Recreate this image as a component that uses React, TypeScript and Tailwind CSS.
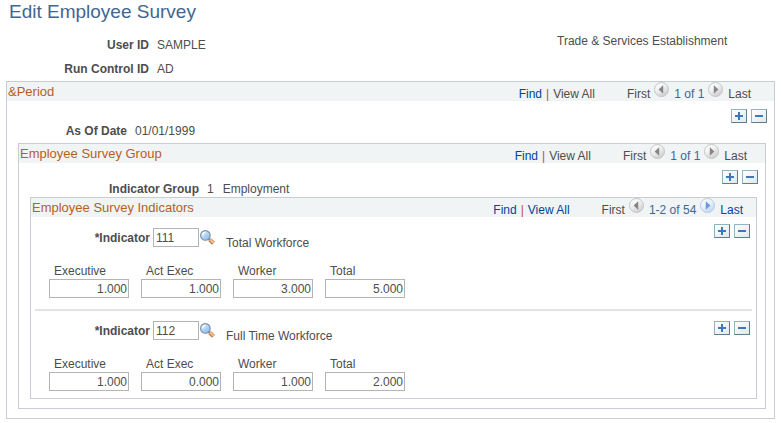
import React, { useId, useState } from 'react';
import { clsx } from 'clsx';

interface NavProps {
    count: string;
    canViewAll?: boolean;
    canGoNext?: boolean;
    className?: string;
}

interface GroupBoxProps extends NavProps {
    title: string;
    boxClass?: string;
    children: React.ReactNode;
}

interface Indicator {
    code: string;
    name: string;
    values: string[];
}

const COLUMNS = ['Executive', 'Act Exec', 'Worker', 'Total'];

const INDICATORS: Indicator[] = [
    { code: '111', name: 'Total Workforce', values: ['1.000', '1.000', '3.000', '5.000'] },
    { code: '112', name: 'Full Time Workforce', values: ['1.000', '0.000', '1.000', '2.000'] },
];

const ArrowIcon = ({ direction, active }: { direction: 'left' | 'right'; active?: boolean }) => {
    const id = useId();
    return (
        <svg width="15" height="15" viewBox="0 0 15 15" className="block">
            <defs>
                <linearGradient id={id} x1="0" y1="0" x2="0.6" y2="1">
                    <stop offset="0" stopColor="#ffffff" />
                    <stop offset="0.45" stopColor={active ? '#eef4fc' : '#f4f4f4'} />
                    <stop offset="1" stopColor={active ? '#c3d8f2' : '#cfcfcf'} />
                </linearGradient>
            </defs>
            <circle cx="7.5" cy="7.5" r="7" fill={`url(#${id})`} stroke={active ? '#b4cae8' : '#c4c4c4'} />
            <path
                d={direction === 'left' ? 'M9.2 3.2V11.8L4.6 7.5Z' : 'M5.8 3.2V11.8L10.4 7.5Z'}
                fill={active ? '#6a9ad8' : '#858585'}
            />
        </svg>
    );
};

const SearchIcon = () => {
    const id = useId();
    return (
        <svg width="15" height="15" viewBox="0 0 15 15" className="block">
            <defs>
                <linearGradient id={id} x1="0" y1="0" x2="0.8" y2="1">
                    <stop offset="0" stopColor="#e6f3fd" />
                    <stop offset="1" stopColor="#86bbee" />
                </linearGradient>
            </defs>
            <path d="M8.5 8.5L10 10" stroke="#6b7480" strokeWidth="2" />
            <path d="M9.6 9.6L13.5 13.3" stroke="#b5774a" strokeWidth="4" />
            <path d="M9.9 9.4L13.7 13" stroke="#f5bd8a" strokeWidth="2.4" />
            <circle cx="5.4" cy="5.4" r="4.8" fill={`url(#${id})`} stroke="#7a8fa8" strokeWidth="1.1" />
            <path d="M2.6 5.2A2.9 2.9 0 0 1 5.3 2.5" fill="none" stroke="#ffffff" strokeWidth="1.3" />
        </svg>
    );
};

const RowButtons = ({ className }: { className?: string }) => (
    <div className={clsx('flex shrink-0 gap-1', className)}>
        {['Add row', 'Delete row'].map((label, i) => (
            <button
                key={label}
                type="button"
                aria-label={label}
                className="flex h-[14px] w-4 items-center justify-center border border-t-[#93b3bd] border-r-[#5f7f88] border-b-[#5f7f88] border-l-[#93b3bd] bg-linear-to-br from-white to-[#dfe8ec]"
            >
                <svg width="8" height="8" viewBox="0 0 8 8" className="block shrink-0" fill="#3d77bd">
                    <rect x="0" y="3" width="8" height="2" />
                    {i === 0 && <rect x="3" y="0" width="2" height="8" />}
                </svg>
            </button>
        ))}
    </div>
);

const ScrollNav = ({ count, canViewAll, canGoNext, className }: NavProps) => (
    <nav className={clsx('flex items-start leading-4', className)}>
        <div className="mt-1 flex gap-1">
            <a href="#find" className="text-[#00459c]">Find</a>
            <span className="text-[#c8463c]">|</span>
            {canViewAll ? <a href="#all" className="text-[#00459c]">View All</a> : <span>View All</span>}
        </div>
        <span className="mt-1 ml-8">First</span>
        <button type="button" disabled aria-label="Previous rows" className="ml-1">
            <ArrowIcon direction="left" />
        </button>
        <span className="mt-1 ml-[5px] text-[#426692]">{count}</span>
        <button type="button" disabled={!canGoNext} aria-label="Next rows" className="ml-1">
            <ArrowIcon direction="right" active={canGoNext} />
        </button>
        {canGoNext ? (
            <a href="#last" className="mt-1 ml-[5px] text-[#00459c]">Last</a>
        ) : (
            <span className="mt-1 ml-[5px]">Last</span>
        )}
    </nav>
);

const GroupBox = ({ title, boxClass, className, children, ...nav }: GroupBoxProps) => (
    <section className={clsx('border border-[#c8ccd3]', boxClass)}>
        <header className="flex h-[19px] items-start justify-between bg-[#f0f4f5]">
            <h2 className="pl-px text-[13px] leading-5 text-[#b5601e]">{title}</h2>
            <ScrollNav className={className} {...nav} />
        </header>
        {children}
    </section>
);

const IndicatorRow = ({ indicator, first }: { indicator: Indicator; first: boolean }) => {
    const id = useId();
    const [code, setCode] = useState(indicator.code);
    const [values, setValues] = useState(indicator.values);

    const changeValue = (index: number, value: string) => {
        setValues(values.map((v, i) => (i === index ? value : v)));
    };

    return (
        <div className="flex items-start justify-between">
            <div className={first ? 'pt-[11px]' : 'pt-[10px]'}>
                <div className="flex items-start">
                    <label htmlFor={id} className="w-[119px] text-right leading-5 font-bold">*Indicator</label>
                    <input
                        id={id}
                        value={code}
                        onChange={(e) => setCode(e.target.value)}
                        className="ml-[3px] h-[19px] w-[46px] border border-[#b4b4b4] bg-white px-[2px]"
                    />
                    <button type="button" aria-label="Look up indicator" className="mt-[2px] ml-px">
                        <SearchIcon />
                    </button>
                    <span className="mt-[7px] ml-[11px] leading-4">{indicator.name}</span>
                </div>
                <div className="flex gap-3 pt-3 pl-[18px]">
                    {COLUMNS.map((column, i) => (
                        <label key={column} className="block w-20">
                            <span className="block pl-[5px] leading-4">{column}</span>
                            <input
                                value={values[i]}
                                onChange={(e) => changeValue(i, e.target.value)}
                                className="block h-[19px] w-full border border-[#b4b4b4] bg-white px-px text-right"
                            />
                        </label>
                    ))}
                </div>
            </div>
            <RowButtons className={first ? 'pt-[7px] pr-[6px]' : 'pt-[10px] pr-[6px]'} />
        </div>
    );
};

export default function App() {
    return (
        <main className="bg-white px-[6px] pb-1 font-['Liberation_Sans',Arial,sans-serif] text-[12px] text-[#4d4d4d]">
            <h1 className="pl-[3px] text-[19px] leading-6 text-[#426692]">Edit Employee Survey</h1>

            <div className="flex items-start pt-[9px]">
                <dl className="grid grid-cols-[143px_400px] gap-x-2 leading-6">
                    <dt className="text-right font-bold">User ID</dt>
                    <dd>SAMPLE</dd>
                    <dt className="text-right font-bold">Run Control ID</dt>
                    <dd>AD</dd>
                </dl>
                <p className="leading-4 whitespace-nowrap">Trade &amp; Services Establishment</p>
            </div>

            <GroupBox title="&amp;Period" count="1 of 1" className="pr-[23px]" boxClass="pb-[9px]">
                <div className="flex items-start justify-between">
                    <dl className="flex gap-2 pt-[22px] pb-1 leading-4">
                        <dt className="w-[120px] text-right font-bold">As Of Date</dt>
                        <dd>01/01/1999</dd>
                    </dl>
                    <RowButtons className="pt-2 pr-[7px]" />
                </div>

                <GroupBox title="Employee Survey Group" count="1 of 1" className="pr-[18px]" boxClass="mr-2 ml-[11px] pb-[9px]">
                    <div className="flex items-start justify-between">
                        <dl className="flex gap-2 pt-[18px] leading-4">
                            <dt className="w-[180px] text-right font-bold">Indicator Group</dt>
                            <dd className="flex gap-[9px]">
                                <span>1</span>
                                <span>Employment</span>
                            </dd>
                        </dl>
                        <RowButtons className="pt-[7px] pr-[7px]" />
                    </div>

                    <GroupBox
                        title="Employee Survey Indicators"
                        count="1-2 of 54"
                        canViewAll
                        canGoNext
                        className="pr-[13px]"
                        boxClass="mr-2 ml-[11px] pb-[7px]"
                    >
                        {INDICATORS.map((indicator, i) => (
                            <React.Fragment key={indicator.code}>
                                {i > 0 && <hr className="mx-1 mt-[11px] border-t-2 border-[#e4e4e4]" />}
                                <IndicatorRow indicator={indicator} first={i === 0} />
                            </React.Fragment>
                        ))}
                    </GroupBox>
                </GroupBox>
            </GroupBox>
        </main>
    );
}
